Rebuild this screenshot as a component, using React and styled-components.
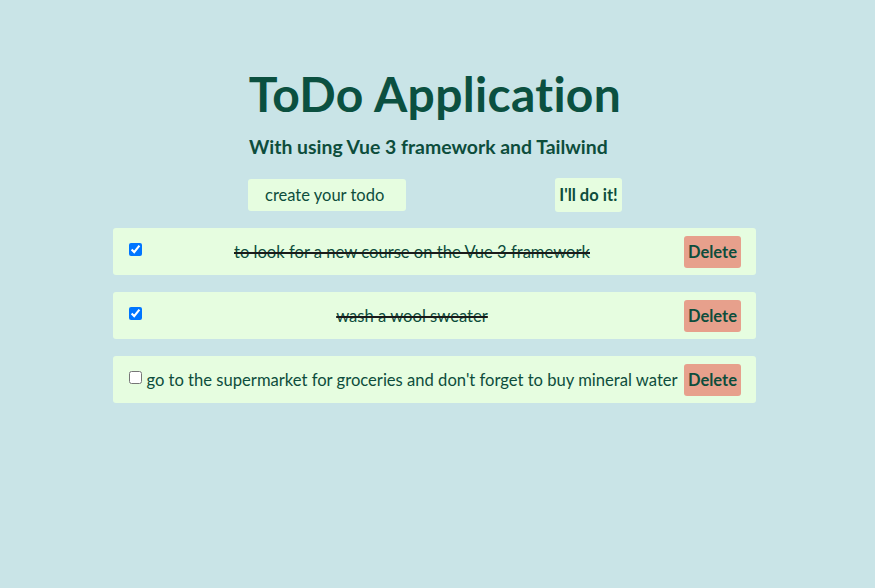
import React, { useState } from "react";
import styled, { createGlobalStyle } from "styled-components";

const Global = createGlobalStyle`
  html, body { margin: 0; padding: 0; }
  body {
    background: #c9e4e7;
    font-family: "Lato", "Noto Sans", sans-serif;
    color: #0d4d3c;
  }
`;

const Page = styled.main`
  display: flex;
  flex-direction: column;
  align-items: center;
  padding-top: 65px;
`;

const Header = styled.div`
  width: 374px;
  display: flex;
  flex-direction: column;
  margin-left: -5px;
`;

const Title = styled.h1`
  margin: 0;
  font-size: 48px;
  line-height: 58px;
  font-weight: 700;
  color: #0b5040;
  text-align: center;
  white-space: nowrap;
  letter-spacing: 0.3px;
`;

const Subtitle = styled.h2`
  margin: 12px 0 0 1px;
  font-size: 19.4px;
  line-height: 24px;
  font-weight: 700;
  color: #0d4d3c;
  white-space: nowrap;
`;

const Form = styled.form`
  margin-top: 19px;
  display: flex;
  justify-content: space-between;
  align-items: center;
`;

const Input = styled.input`
  width: 158px;
  height: 32px;
  box-sizing: border-box;
  border: none;
  border-radius: 3px;
  background: #e6fde0;
  padding: 0 17px;
  font-family: inherit;
  font-size: 16.5px;
  color: #0d4d3c;
  outline: none;
  &::placeholder { color: #0d4d3c; opacity: 1; }
`;

const AddButton = styled.button`
  height: 34px;
  width: 67px;
  border: none;
  border-radius: 3px;
  background: #e6fde0;
  font-family: inherit;
  font-weight: 700;
  font-size: 16.5px;
  color: #0d4d3c;
  padding: 0;
  cursor: pointer;
`;

const List = styled.ul`
  list-style: none;
  margin: 16px 0 0 -6px;
  padding: 0;
  width: 643px;
  display: flex;
  flex-direction: column;
  gap: 17px;
`;

const Row = styled.li`
  height: 47px;
  box-sizing: border-box;
  background: #e6fde0;
  border-radius: 3px;
  display: flex;
  align-items: center;
  padding: 0 15px 0 12px;
`;

const Check = styled.input`
  width: 13px;
  height: 13px;
  margin: 0 2px 0 4px;
  flex: none;
  position: relative;
  top: -2px;
`;

const Text = styled.span`
  flex: 1;
  text-align: center;
  font-size: 16.6px;
  color: #0d4d3c;
  white-space: nowrap;
  text-decoration: ${(p) => (p.$done ? "line-through" : "none")};
  text-decoration-color: #1a1a1a;
  text-decoration-thickness: 1.5px;
`;

const DeleteButton = styled.button`
  flex: none;
  width: 57px;
  height: 32px;
  border: none;
  border-radius: 3px;
  background: #e7a08c;
  font-family: inherit;
  font-weight: 700;
  font-size: 16.5px;
  color: #0d4d3c;
  padding: 0;
  margin-left: 4px;
  cursor: pointer;
`;

const initial = [
  { id: 1, text: "to look for a new course on the Vue 3 framework", done: true },
  { id: 2, text: "wash a wool sweater", done: true },
  { id: 3, text: "go to the supermarket for groceries and don't forget to buy mineral water", done: false },
];

export default function App() {
  const [todos, setTodos] = useState(initial);
  const [value, setValue] = useState("");

  const add = (e) => {
    e.preventDefault();
    if (!value.trim()) return;
    setTodos([...todos, { id: Date.now(), text: value, done: false }]);
    setValue("");
  };

  return (
    <>
      <Global />
      <Page>
        <Header>
          <Title>ToDo Application</Title>
          <Subtitle>With using Vue 3 framework and Tailwind</Subtitle>
          <Form onSubmit={add}>
            <Input
              placeholder="create your todo"
              value={value}
              onChange={(e) => setValue(e.target.value)}
            />
            <AddButton type="submit">I'll do it!</AddButton>
          </Form>
        </Header>
        <List>
          {todos.map((t) => (
            <Row key={t.id}>
              <Check
                type="checkbox"
                checked={t.done}
                onChange={() =>
                  setTodos(todos.map((x) => (x.id === t.id ? { ...x, done: !x.done } : x)))
                }
              />
              <Text $done={t.done}>{t.text}</Text>
              <DeleteButton onClick={() => setTodos(todos.filter((x) => x.id !== t.id))}>
                Delete
              </DeleteButton>
            </Row>
          ))}
        </List>
      </Page>
    </>
  );
}
